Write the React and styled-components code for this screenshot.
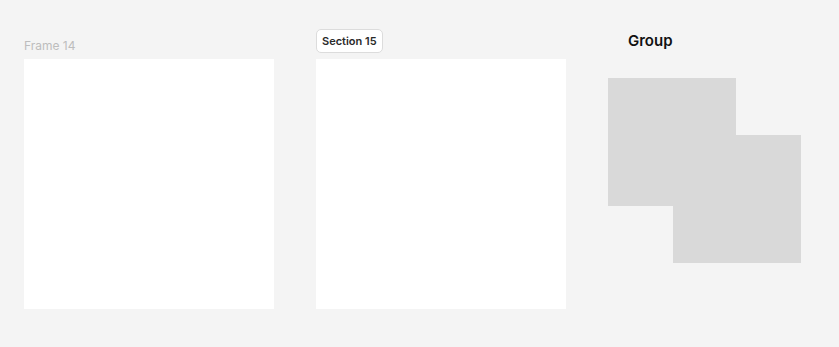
import React from 'react';
import styled, { createGlobalStyle } from 'styled-components';

const GlobalStyle = createGlobalStyle`
    html, body {
        margin: 0;
        padding: 0;
        background: #f4f4f4;
        font-family: Inter, "Noto Sans", sans-serif;
    }
`

const Canvas = styled.div`
    width: 839px;
    height: 347px;
    box-sizing: border-box;
    padding: 29px 0 0 24px;
    display: flex;
    align-items: flex-start;
    gap: 42px;
`

const Column = styled.div`
    display: flex;
    flex-direction: column;
`

const Header = styled.div`
    height: 30px;
    display: flex;
    align-items: ${({ align }) => align || 'flex-end'};
`

const FrameLabel = styled.div`
    font-size: 12px;
    line-height: 14px;
    color: #bdbdbd;
    margin-bottom: 6px;
`

const SectionBadge = styled.div`
    height: 24px;
    box-sizing: border-box;
    padding: 0 5px;
    display: flex;
    align-items: center;
    border: 1px solid #dcdcdc;
    border-radius: 5px;
    background: #ffffff;
    font-size: 11px;
    font-weight: 600;
    color: #2a2a2a;
`

const Frame = styled.div`
    width: 250px;
    height: 250px;
    background: #ffffff;
`

const GroupColumn = styled.div`
    display: flex;
    flex-direction: column;
`

const GroupLabel = styled.div`
    margin: 2px 0 0 20px;
    font-size: 15px;
    line-height: 20px;
    font-weight: 600;
    color: #111111;
`

const Shapes = styled.div`
    position: relative;
    margin-top: 27px;
    width: 194px;
    height: 186px;
`

const Square = styled.div`
    position: absolute;
    left: ${({ x }) => x}px;
    top: ${({ y }) => y}px;
    width: 128px;
    height: 128px;
    background: #d9d9d9;
`

export default function App() {
    return (
        <>
            <GlobalStyle />
            <Canvas>
                <Column>
                    <Header>
                        <FrameLabel>Frame 14</FrameLabel>
                    </Header>
                    <Frame />
                </Column>
                <Column>
                    <Header align="flex-start">
                        <SectionBadge>Section 15</SectionBadge>
                    </Header>
                    <Frame />
                </Column>
                <GroupColumn>
                    <GroupLabel>Group</GroupLabel>
                    <Shapes>
                        <Square x={0} y={0} />
                        <Square x={65} y={57} />
                    </Shapes>
                </GroupColumn>
            </Canvas>
        </>
    )
}
